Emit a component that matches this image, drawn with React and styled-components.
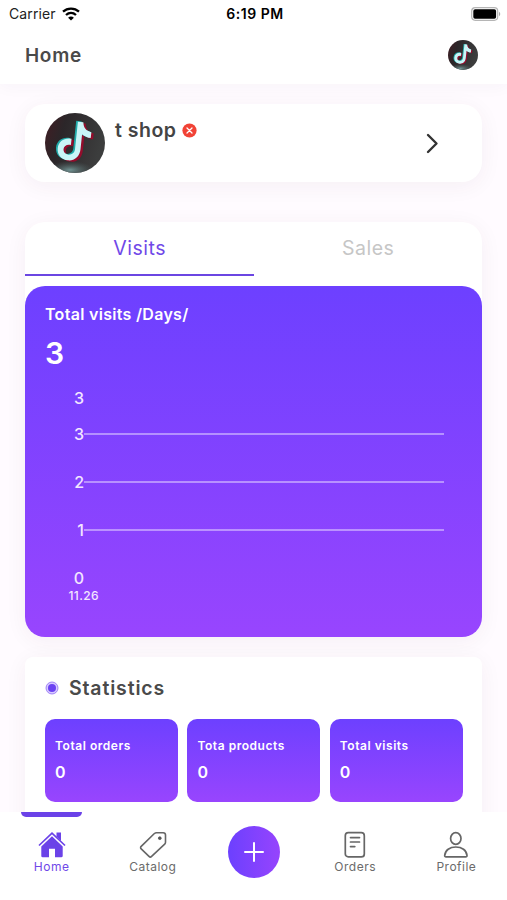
import React, { useState } from 'react'
import styled, { createGlobalStyle } from 'styled-components'

const GlobalStyle = createGlobalStyle`
    * {
        box-sizing: border-box;
    }
    body {
        margin: 0;
        font-family: Inter, Roboto, sans-serif;
        background: #fffbff;
        overflow: hidden;
    }
    svg {
        display: block;
        flex: none;
    }
`

const Screen = styled.div`
    display: flex;
    flex-direction: column;
    height: 900px;
    overflow: hidden;
`

const Top = styled.header`
    flex: none;
    height: 84px;
    background: #fff;
    box-shadow: 0 2px 16px rgba(60, 40, 70, 0.04);
`

const StatusBar = styled.div`
    display: grid;
    grid-template-columns: 1fr auto 1fr;
    align-items: center;
    height: 27px;
    padding: 0 6px 0 9px;
    font-size: 14px;
    line-height: 27px;
    color: #222;
`

const Carrier = styled.div`
    display: flex;
    align-items: center;
    gap: 6px;
    letter-spacing: 0.1px;
`

const Clock = styled.div`
    font-weight: 600;
    color: #000;
    letter-spacing: 0.5px;
`

const BatterySlot = styled.div`
    display: flex;
    justify-content: flex-end;
`

const TitleBar = styled.div`
    display: flex;
    align-items: center;
    justify-content: space-between;
    height: 55px;
    padding: 0 29px 0 25px;
`

const PageTitle = styled.h1`
    margin: 0;
    padding-top: 2px;
    font-size: 19px;
    font-weight: 600;
    letter-spacing: 0.7px;
    color: #4a4a4a;
`

const Content = styled.main`
    flex: 1;
    min-height: 0;
    padding: 20px 24.6px 0 25.4px;
    overflow: hidden;
`

const Card = styled.section`
    background: #fff;
    box-shadow: 0 4px 22px rgba(70, 40, 60, 0.055);
`

const ShopCard = styled(Card)`
    display: flex;
    align-items: flex-start;
    height: 78px;
    padding: 9px 43px 0 19.6px;
    border-radius: 20px;
`

const ShopName = styled.div`
    display: flex;
    flex: 1;
    align-items: center;
    gap: 6px;
    padding: 5px 0 0 10px;
    font-size: 19.5px;
    line-height: 24px;
    font-weight: 600;
    letter-spacing: 0.5px;
    color: #444;
`

const ChevronSlot = styled.div`
    padding-top: 20px;
`

const VisitsCard = styled(Card)`
    margin-top: 40px;
    border-radius: 20px;
`

const Tabs = styled.div`
    display: flex;
    height: 64px;
    padding-bottom: 10.5px;
`

const Tab = styled.button`
    flex: 1;
    padding: 0;
    border: none;
    border-bottom: 2.5px solid ${({ $active }) => ($active ? '#6b46e2' : 'transparent')};
    background: none;
    font-family: inherit;
    font-size: 19.5px;
    letter-spacing: 0.5px;
    color: ${({ $active }) => ($active ? '#7048e8' : '#c6c6c6')};
`

const ChartPanel = styled.div`
    height: 351px;
    padding: 18px 38.6px 0 19.6px;
    border-radius: 20px;
    background: linear-gradient(180deg, #6d40ff 0%, #9845fe 100%);
    color: #fff;
`

const ChartTitle = styled.div`
    font-size: 16px;
    line-height: 20px;
    font-weight: 600;
    letter-spacing: 0.3px;
`

const ChartTotal = styled.div`
    margin-top: 8px;
    font-size: 30px;
    line-height: 42px;
    font-weight: 600;
`

const Chart = styled.div`
    padding-top: 12px;
`

const AxisRow = styled.div`
    display: flex;
    align-items: center;
    height: ${({ $height }) => $height}px;
    font-size: 16px;
    color: #f3e6ff;
`

const AxisLabel = styled.span`
    width: 39px;
    font-weight: 500;
    text-align: right;
`

const AxisLine = styled.span`
    flex: 1;
    height: 2px;
    background: rgba(255, 255, 255, 0.42);
`

const AxisDate = styled.div`
    padding-left: 23.5px;
    margin-top: -14px;
    font-size: 12px;
    line-height: 16px;
    font-weight: 500;
    letter-spacing: 0.4px;
    color: #f3e6ff;
`

const StatisticsCard = styled(Card)`
    height: 220px;
    margin-top: 20px;
    padding: 20px 19.6px 0;
    border-radius: 8px;
`

const SectionTitle = styled.h2`
    display: flex;
    align-items: center;
    gap: 10px;
    margin: 0 0 20px;
    font-size: 19.5px;
    line-height: 22px;
    font-weight: 600;
    letter-spacing: 0.85px;
    color: #4a4a4a;
`

const Tiles = styled.div`
    display: grid;
    grid-template-columns: repeat(3, 133px);
    justify-content: space-between;
`

const Tile = styled.div`
    height: 83px;
    padding: 19px 10px 0;
    border-radius: 10px;
    background: linear-gradient(180deg, #6d40ff 0%, #9845fe 100%);
    color: #fff;
`

const TileLabel = styled.div`
    font-size: 12px;
    line-height: 16px;
    font-weight: 600;
    letter-spacing: 0.55px;
    white-space: nowrap;
`

const TileValue = styled.div`
    margin-top: 8px;
    font-size: 16px;
    line-height: 20px;
    font-weight: 600;
`

const BottomBar = styled.nav`
    flex: none;
    display: grid;
    grid-template-columns: repeat(5, 1fr);
    height: 88px;
    padding-left: 1px;
    background: #fff;
`

const NavItem = styled.div`
    display: flex;
    flex-direction: column;
    align-items: center;
    font-size: 12px;
    line-height: 16px;
    letter-spacing: 0.5px;
    color: ${({ $active }) => ($active ? '#7048e8' : '#6b6b6b')};
`

const Indicator = styled.span`
    width: 61px;
    height: 5px;
    margin-bottom: 14px;
    border-radius: 0 0 5px 5px;
    background: ${({ $active }) => ($active ? '#6b42e8' : 'transparent')};
`

const AddButton = styled.button`
    display: flex;
    align-items: center;
    justify-content: center;
    justify-self: center;
    width: 52px;
    height: 52px;
    margin-top: 14px;
    padding: 0;
    border: none;
    border-radius: 50%;
    background: linear-gradient(90deg, #6c40fe 0%, #9644fd 100%);
`

const notePath = 'M30.5 9h5.500c.8 5.500 3.500 8.300 9 9v6c-3.500 0-6.300-1-9-2.900v14.900c0 8.500-5.400 12.500-11.500 12.500-6.500 0-11.300-4.700-11.300-11 0-7 5.700-11.500 12.800-10.800v6.200c-3.700-.7-6.900 1.300-6.900 4.900 0 3 2.400 5 5.200 5 3.400 0 6.200-2.200 6.200-6.300z'

const Avatar = ({ size, id }) => (
    <svg width={size} height={size} viewBox="0 0 60 60">
        <defs>
            <clipPath id={`${id}-clip`}><circle cx="30" cy="30" r="30" /></clipPath>
            <linearGradient id={`${id}-bg`} x1="0" y1="0" x2="1" y2="0.3">
                <stop offset="0" stopColor="#421c23" />
                <stop offset="0.35" stopColor="#2b2629" />
                <stop offset="1" stopColor="#3c3d3d" />
            </linearGradient>
            <radialGradient id={`${id}-glow`}>
                <stop offset="0" stopColor="#719393" />
                <stop offset="1" stopColor="#4c5b5b" stopOpacity="0" />
            </radialGradient>
        </defs>
        <g clipPath={`url(#${id}-clip)`}>
            <rect width="60" height="60" fill={`url(#${id}-bg)`} />
            <ellipse cx="25" cy="57" rx="24" ry="9" fill={`url(#${id}-glow)`} />
            <path d={notePath} fill="#940d2c" transform="translate(2.500 .8) rotate(6 30 30)" />
            <path d={notePath} fill="#20aaa9" transform="translate(-1.500 -1.300) rotate(6 30 30)" />
            <path d={notePath} fill="#c9f5f7" transform="translate(.2 -.5) rotate(6 30 30)" />
        </g>
    </svg>
)

const WifiIcon = () => (
    <svg width="18" height="14" viewBox="0 0 18 14" fill="none" stroke="#000" strokeWidth="2.300">
        <path d="M1 4.700C5.500.6 12.500.6 17 4.700" />
        <path d="M4 8c3-2.700 7-2.700 10 0" />
        <path d="M9 13.600 6.100 10.700c1.700-1.500 4.100-1.500 5.800 0z" fill="#000" stroke="none" />
    </svg>
)

const BatteryIcon = () => (
    <svg width="30" height="14" viewBox="0 0 30 14">
        <rect x=".7" y=".7" width="26" height="12.600" rx="3.500" fill="#fff" stroke="#b5b5b5" strokeWidth="1.200" />
        <rect x="2.300" y="2.300" width="22.800" height="9.400" rx="1.800" fill="#000" />
        <path d="M28 4.800c1.700.7 1.700 3.700 0 4.400z" fill="#aaa" />
    </svg>
)

const ErrorBadge = () => (
    <svg width="15" height="15" viewBox="0 0 15 15">
        <circle cx="7.500" cy="7.500" r="7.100" fill="#f14336" />
        <path d="m5 5 5 5m0-5-5 5" stroke="#fff" strokeWidth="1.300" strokeLinecap="round" />
    </svg>
)

const ChevronIcon = () => (
    <svg width="14" height="21" viewBox="0 0 14 21" fill="none" stroke="#333" strokeWidth="2.400" strokeLinecap="round" strokeLinejoin="round">
        <path d="m3 2 8.500 8.500L3 19" />
    </svg>
)

const DotIcon = () => (
    <svg width="14" height="14" viewBox="0 0 14 14">
        <circle cx="7" cy="7" r="6" fill="#d7c9ff" stroke="#8e6cf4" strokeWidth=".8" />
        <circle cx="7" cy="7" r="4" fill="#6b42f2" />
    </svg>
)

const HomeIcon = () => (
    <svg width="28" height="28" viewBox="0 0 28 28">
        <path d="M18.500 1.500h4.500v8.500l-4.500-4.500z" fill="#6b42e8" />
        <path d="m1 14.500 13-12.300 13 12.300" fill="none" stroke="#6b42e8" strokeWidth="1.700" />
        <path d="m14 5.300 10.700 10.200v9.600c0 .7-.4 1.200-1.200 1.200H17v-8.500h-6v8.500H4.500c-.8 0-1.200-.5-1.200-1.200v-9.600z" fill="#6b42e8" />
    </svg>
)

const TagIcon = () => (
    <svg width="28" height="28" viewBox="0 0 28 28" fill="none" stroke="#666" strokeWidth="1.600" strokeLinejoin="round">
        <path d="M17.400 1.700h6.800c1.500 0 2.300.9 2.300 2.300v7.200c0 .8-.3 1.400-.8 2L12.600 25.400c-.8.8-1.800.8-2.600 0l-7.800-7.500c-.8-.8-.8-1.700 0-2.500L15.400 2.500c.6-.5 1.200-.8 2-.8z" />
        <circle cx="20.800" cy="7.200" r="1.400" fill="#555" stroke="#555" strokeWidth=".8" />
    </svg>
)

const OrdersIcon = () => (
    <svg width="28" height="28" viewBox="0 0 28 28" fill="none" stroke="#666" strokeWidth="1.700" strokeLinecap="round">
        <rect x="4.300" y="1.700" width="19" height="24.200" rx="3" />
        <path d="M9.500 6.600h9M9.500 11h9M9.500 15.600h4.300" />
    </svg>
)

const ProfileIcon = () => (
    <svg width="28" height="28" viewBox="0 0 28 28" fill="none" stroke="#666" strokeWidth="1.700" strokeLinejoin="round">
        <ellipse cx="13.800" cy="7.500" rx="5.200" ry="5.900" />
        <path d="M2.700 24.300c.5-5 5-8.300 11.100-8.300s10.700 3.300 11.200 8.300c.1 1-.4 1.600-1.300 1.600H4c-.9 0-1.400-.6-1.300-1.600z" />
    </svg>
)

const PlusIcon = () => (
    <svg width="20" height="20" viewBox="0 0 20 20" stroke="#fff" strokeWidth="2" strokeLinecap="round">
        <path d="M10 1v18M1 10h18" />
    </svg>
)

const axis = [
    { label: '3', height: 24 },
    { label: '3', height: 48, line: true },
    { label: '2', height: 48, line: true },
    { label: '1', height: 48, line: true },
    { label: '0', height: 48 },
]

const statistics = [
    { label: 'Total orders', value: 0 },
    { label: 'Tota products', value: 0 },
    { label: 'Total visits', value: 0 },
]

const BottomItem = ({ label, icon, active }) => (
    <NavItem $active={active}>
        <Indicator $active={active} />
        {icon}
        <span>{label}</span>
    </NavItem>
)

const App = () => {
    const [tab, setTab] = useState('Visits')

    return (
        <Screen>
            <GlobalStyle />
            <Top>
                <StatusBar>
                    <Carrier>Carrier <WifiIcon /></Carrier>
                    <Clock>6:19 PM</Clock>
                    <BatterySlot><BatteryIcon /></BatterySlot>
                </StatusBar>
                <TitleBar>
                    <PageTitle>Home</PageTitle>
                    <Avatar size={30} id="account" />
                </TitleBar>
            </Top>

            <Content>
                <ShopCard>
                    <Avatar size={60} id="shop" />
                    <ShopName>t shop <ErrorBadge /></ShopName>
                    <ChevronSlot><ChevronIcon /></ChevronSlot>
                </ShopCard>

                <VisitsCard>
                    <Tabs>
                        {['Visits', 'Sales'].map((name) => (
                            <Tab key={name} $active={tab === name} onClick={() => setTab(name)}>{name}</Tab>
                        ))}
                    </Tabs>
                    <ChartPanel>
                        <ChartTitle>Total visits /Days/</ChartTitle>
                        <ChartTotal>3</ChartTotal>
                        <Chart>
                            {axis.map(({ label, height, line }, i) => (
                                <AxisRow key={i} $height={height}>
                                    <AxisLabel>{label}</AxisLabel>
                                    {line && <AxisLine />}
                                </AxisRow>
                            ))}
                            <AxisDate>11.26</AxisDate>
                        </Chart>
                    </ChartPanel>
                </VisitsCard>

                <StatisticsCard>
                    <SectionTitle><DotIcon />Statistics</SectionTitle>
                    <Tiles>
                        {statistics.map(({ label, value }) => (
                            <Tile key={label}>
                                <TileLabel>{label}</TileLabel>
                                <TileValue>{value}</TileValue>
                            </Tile>
                        ))}
                    </Tiles>
                </StatisticsCard>
            </Content>

            <BottomBar>
                <BottomItem label="Home" icon={<HomeIcon />} active />
                <BottomItem label="Catalog" icon={<TagIcon />} />
                <AddButton aria-label="Add"><PlusIcon /></AddButton>
                <BottomItem label="Orders" icon={<OrdersIcon />} />
                <BottomItem label="Profile" icon={<ProfileIcon />} />
            </BottomBar>
        </Screen>
    )
}

export default App
